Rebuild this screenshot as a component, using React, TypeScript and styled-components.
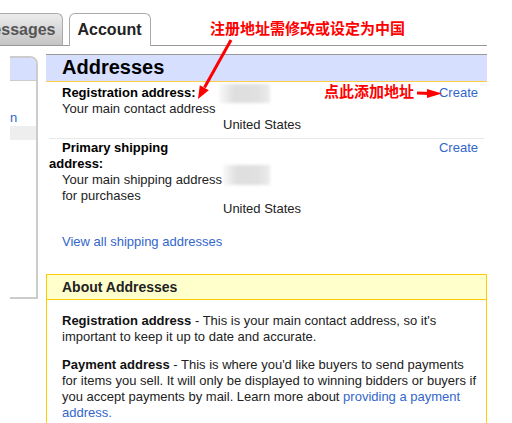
import React from "react";
import styled, { createGlobalStyle } from "styled-components";

const Global = createGlobalStyle`
  html, body { margin: 0; padding: 0; background: #fff; }
  body { font-family: "Liberation Sans", Arial, sans-serif; }
`;

const Page = styled.div`
  position: relative;
  width: 512px;
  height: 423px;
  overflow: hidden;
  box-sizing: border-box;
  padding-top: 13px;
  background: #fff;
  font: 13px/16px "Liberation Sans", Arial, sans-serif;
  color: #222;
`;

const TabBar = styled.div`
  display: flex;
  align-items: flex-end;
  margin-left: -31px;
  width: 518px;
  border-bottom: 1px solid #999;
`;

const Tab = styled.div<{ $active?: boolean }>`
  box-sizing: content-box;
  border: 1px solid #aaa;
  border-bottom: none;
  border-radius: 6px 6px 0 0;
  font-weight: bold;
  font-size: 16px;
  white-space: nowrap;
  ${(p) =>
    p.$active
      ? `
    height: 32px;
    line-height: 32px;
    padding: 0 8px;
    margin: 0 0 -1px 6px;
    background: #fff;
    color: #222;
  `
      : `
    height: 31px;
    line-height: 31px;
    padding: 0 6px 0 9px;
    background: linear-gradient(#ececec, #c4c4c4);
    color: #555;
  `}
`;

const Content = styled.div`
  display: flex;
  align-items: flex-start;
  margin-top: 8px;
`;

const Sidebar = styled.div`
  margin: 2px 8px 0 10px;
  width: 26px;
  height: 239px;
  border: 2px solid #ccc;
  border-left: none;
  border-top-right-radius: 8px;
  overflow: hidden;
`;

const SideHead = styled.div`
  height: 22px;
  background: #d6dffe;
  border-bottom: 1px solid #ccc;
`;

const SideLink = styled.div`
  margin-top: 29px;
  line-height: 16px;
  color: #3366cc;
`;

const SideSelected = styled.div`
  height: 14px;
  background: #eee;
`;

const Main = styled.div`
  width: 441px;
`;

const SectionHead = styled.h2`
  margin: 0;
  height: 26px;
  box-sizing: content-box;
  padding-left: 16px;
  background: #d6dffe;
  border-top: 1px solid #999;
  border-bottom: 1px solid #ffcc44;
  font: bold 20px/24px "Liberation Sans", Arial, sans-serif;
  color: #000;
`;

const Rows = styled.div`
  padding: 0 3px;
`;

const Row = styled.div<{ $top: number; $bottom: number; $sep?: boolean }>`
  display: grid;
  grid-template-columns: 172px 1fr auto;
  padding-top: ${(p) => p.$top}px;
  padding-bottom: ${(p) => p.$bottom}px;
  border-bottom: ${(p) => (p.$sep ? "1px solid #e8e8e8" : "none")};
`;

const Label = styled.div`
  font-weight: bold;
  color: #000;
  text-indent: 13px;
  white-space: nowrap;
`;

const Desc = styled.div`
  padding-left: 13px;
  white-space: nowrap;
  color: #222;
`;

const Value = styled.div`
  padding-left: 2px;
`;

const Patch = styled.div<{ $w: number; $h: number; $top: number; $left: number }>`
  width: ${(p) => p.$w}px;
  height: ${(p) => p.$h}px;
  margin-top: ${(p) => p.$top}px;
  margin-left: ${(p) => p.$left}px;
  background: linear-gradient(90deg, rgba(232, 232, 232, 0.3), #dedede 30%, #e0e0e0 75%, #ececec);
  filter: blur(1.5px);
`;

const Country = styled.div<{ $top: number }>`
  margin-top: ${(p) => p.$top}px;
  white-space: nowrap;
  color: #222;
`;

const Action = styled.div`
  padding-right: 6px;
`;

const Link = styled.a`
  color: #3366cc;
  text-decoration: none;
  cursor: pointer;
`;

const ViewAll = styled.div`
  margin-top: 17px;
  padding-left: 16px;
`;

const About = styled.div`
  margin-top: 24px;
  height: 200px;
  border: 1px solid #ffcc00;
  border-bottom: none;
`;

const AboutHead = styled.h3`
  margin: 0;
  height: 24px;
  padding-left: 15px;
  background: #ffffcc;
  border-bottom: 1px solid #ffcc00;
  font: bold 14px/24px "Liberation Sans", Arial, sans-serif;
  color: #222;
`;

const AboutBody = styled.div`
  padding: 13px 6px 0 15px;
`;

const Para = styled.p`
  margin: 0 0 12px;
  white-space: nowrap;
  color: #222;
  b {
    color: #111;
  }
`;

const Note = styled.div<{ $x: number; $y: number }>`
  position: absolute;
  left: ${(p) => p.$x}px;
  top: ${(p) => p.$y}px;
  font: bold 15px/15px "Noto Sans CJK SC", sans-serif;
  color: #f00;
  white-space: nowrap;
`;

const Overlay = styled.svg`
  position: absolute;
  left: 0;
  top: 0;
  pointer-events: none;
`;

export default function App() {
  return (
    <>
      <Global />
      <Page>
        <TabBar>
          <Tab>Messages</Tab>
          <Tab $active>Account</Tab>
        </TabBar>
        <Content>
          <Sidebar>
            <SideHead />
            <SideLink>n</SideLink>
            <SideSelected />
          </Sidebar>
          <Main>
            <SectionHead>Addresses</SectionHead>
            <Rows>
              <Row $top={3} $bottom={5} $sep>
                <div>
                  <Label>Registration address:</Label>
                  <Desc>Your main contact address</Desc>
                </div>
                <Value>
                  <Patch $w={51} $h={19} $top={-1} $left={-4} />
                  <Country $top={14}>United States</Country>
                </Value>
                <Action>
                  <Link>Create</Link>
                </Action>
              </Row>
              <Row $top={1} $bottom={0}>
                <div>
                  <Label>
                    Primary shipping
                    <br />
                    address:
                  </Label>
                  <Desc>
                    Your main shipping address
                    <br />
                    for purchases
                  </Desc>
                </div>
                <Value>
                  <Patch $w={47} $h={20} $top={25} $left={0} />
                  <Country $top={16}>United States</Country>
                </Value>
                <Action>
                  <Link>Create</Link>
                </Action>
              </Row>
            </Rows>
            <ViewAll>
              <Link>View all shipping addresses</Link>
            </ViewAll>
            <About>
              <AboutHead>About Addresses</AboutHead>
              <AboutBody>
                <Para>
                  <b>Registration address</b> - This is your main contact address, so it's
                  <br />
                  important to keep it up to date and accurate.
                </Para>
                <Para>
                  <b>Payment address</b> - This is where you'd like buyers to send payments
                  <br />
                  for items you sell. It will only be displayed to winning bidders or buyers if
                  <br />
                  you accept payments by mail. Learn more about <Link>providing a payment</Link>
                  <br />
                  <Link>address.</Link>
                </Para>
              </AboutBody>
            </About>
          </Main>
        </Content>
        <Note $x={210} $y={20}>注册地址需修改或设定为中国</Note>
        <Note $x={324} $y={83}>点此添加地址</Note>
        <Overlay width="512" height="423" viewBox="0 0 512 423">
          <line x1="231" y1="40" x2="204.5" y2="87.5" stroke="#f00" strokeWidth="3" />
          <polygon points="198,99 208.8,90.2 199.8,85.2" fill="#f00" />
          <line x1="417" y1="93" x2="430" y2="93.5" stroke="#f00" strokeWidth="3" />
          <polygon points="427,89 442,93.5 427,98" fill="#f00" />
        </Overlay>
      </Page>
    </>
  );
}
